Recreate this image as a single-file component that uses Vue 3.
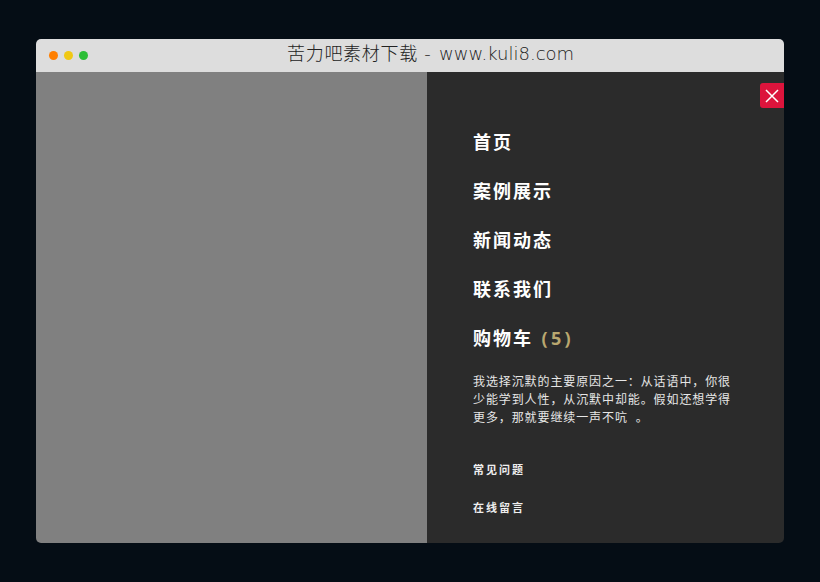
<script setup>
const links = [
  { text: '首页' },
  { text: '案例展示' },
  { text: '新闻动态' },
  { text: '联系我们' },
  { text: '购物车', count: '(5)' },
]
const smallLinks = ['常见问题', '在线留言']
</script>

<template>
  <div class="page">
    <div class="window">
      <header class="titlebar">
        <div class="dots">
          <span class="dot orange"></span>
          <span class="dot yellow"></span>
          <span class="dot green"></span>
        </div>
        <div class="title">苦力吧素材下载 - <span class="domain">www.kuli8.com</span></div>
      </header>
      <div class="body">
        <div class="left"></div>
        <aside class="panel">
          <button class="close" aria-label="关闭">
            <svg width="14" height="14" viewBox="0 0 14 14">
              <path d="M1 1L13 13M13 1L1 13" stroke="#fff" stroke-width="1.5" fill="none" />
            </svg>
          </button>
          <nav class="nav">
            <a v-for="l in links" :key="l.text" class="link">{{ l.text }}<span v-if="l.count" class="count">{{ l.count }}</span></a>
          </nav>
          <p class="desc">我选择沉默的主要原因之一：从话语中，你很少能学到人性，从沉默中却能。假如还想学得更多，那就要继续一声不吭&nbsp; 。</p>
          <div class="small">
            <a v-for="s in smallLinks" :key="s" class="small-link">{{ s }}</a>
          </div>
        </aside>
      </div>
    </div>
  </div>
</template>

<style>
html, body { margin: 0; background: #050d15; }
</style>

<style scoped>
.page {
  width: 820px;
  height: 582px;
  box-sizing: border-box;
  padding: 39px 36px;
  background: #050d15;
  font-family: "Open Sans", "Noto Sans CJK SC", sans-serif;
}
.window {
  width: 748px;
  height: 504px;
  border-radius: 5px;
  overflow: hidden;
  display: flex;
  flex-direction: column;
}
.titlebar {
  height: 33px;
  flex: none;
  background: #dddddd;
  display: flex;
  align-items: center;
  position: relative;
}
.dots {
  display: flex;
  gap: 6px;
  padding-left: 12.5px;
  position: absolute;
  left: 0;
  top: 12px;
}
.dot { width: 9px; height: 9px; border-radius: 50%; }
.orange { background: #ff7f00; }
.yellow { background: #f0c814; }
.green { background: #2dbe37; }
.title {
  padding-left: 251px;
  margin-top: -5px;
  font-size: 18px;
  font-weight: 200;
  line-height: 33px;
  letter-spacing: 0.7px;
  color: #222;
  font-family: "DejaVu Sans", "Noto Sans CJK SC", sans-serif;
}
.domain { letter-spacing: 0; margin-left: 1px; }
.body { flex: 1; display: flex; min-height: 0; }
.left { width: 391px; background: #808080; }
.panel {
  flex: 1;
  background: #2b2b2b;
  position: relative;
  padding: 56px 46px 0;
  color: #fff;
}
.close {
  position: absolute;
  top: 11px;
  right: 0;
  width: 24px;
  height: 25px;
  padding: 0;
  border: none;
  border-radius: 3px 0 0 3px;
  background: #dc143c;
  display: flex;
  align-items: center;
  justify-content: center;
}
.nav { display: flex; flex-direction: column; gap: 21px; }
.link {
  font-size: 18px;
  font-weight: 700;
  line-height: 28px;
  letter-spacing: 2px;
  color: #fff;
}
.count { color: #b9a76f; margin-left: 8.5px; letter-spacing: 3.3px; }
.desc {
  width: 262px;
  margin: 21px 0 0;
  font-size: 12px;
  line-height: 18.2px;
  letter-spacing: 0.9px;
  color: #e6e6e6;
}
.small { display: flex; flex-direction: column; gap: 24px; margin-top: 35.5px; }
.small-link {
  font-size: 11px;
  font-weight: 700;
  line-height: 14px;
  letter-spacing: 2px;
  color: #eee;
}
</style>
